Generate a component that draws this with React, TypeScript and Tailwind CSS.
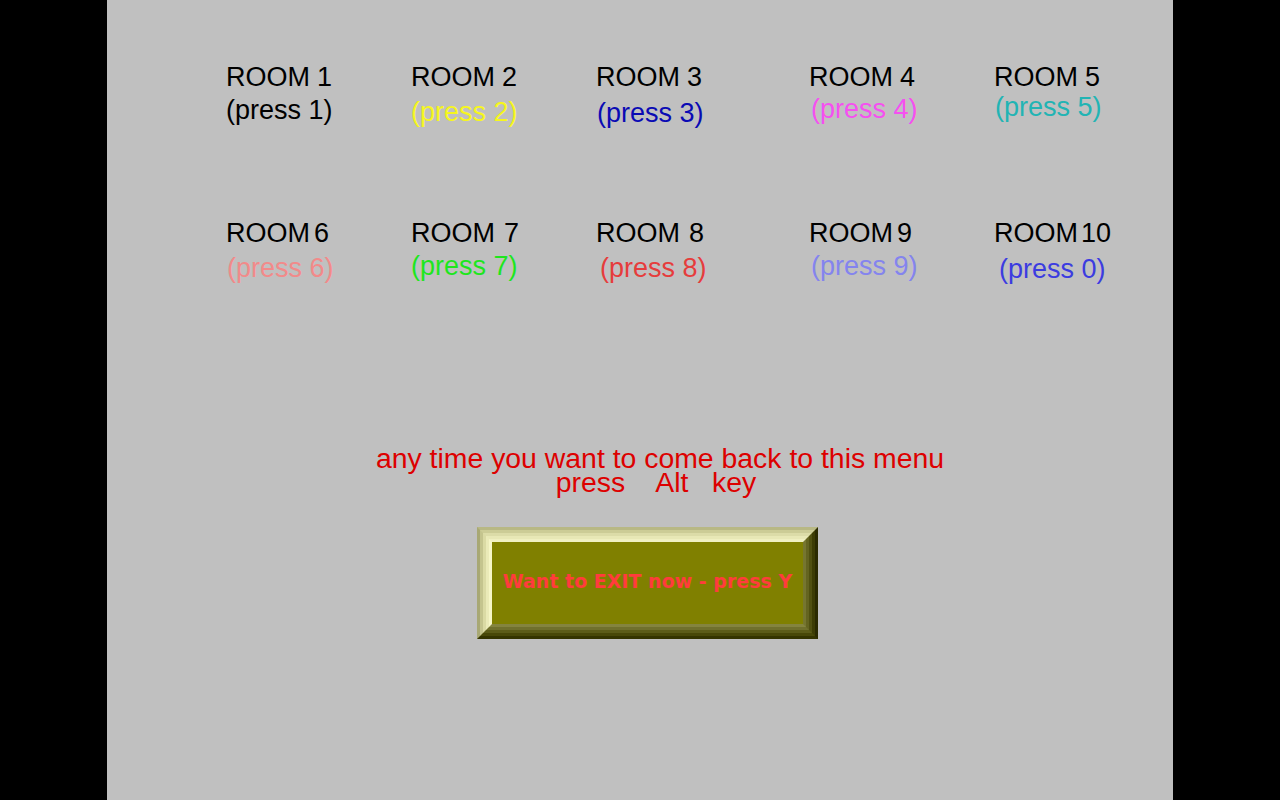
import React from "react";

type Room = {
  digit: string;
  gap: string;
  press: string;
  color: string;
  top: string;
  shift: string;
};

const rooms: Room[] = [
  { digit: "1", gap: "ml-[7px]", press: "(press 1)", color: "text-black", top: "mt-[1px]", shift: "ml-0" },
  { digit: "2", gap: "ml-[7px]", press: "(press 2)", color: "text-[#f6f61e]", top: "mt-[3px]", shift: "ml-0" },
  { digit: "3", gap: "ml-[7px]", press: "(press 3)", color: "text-[#0a0ab4]", top: "mt-[4px]", shift: "ml-[1px]" },
  { digit: "4", gap: "ml-[7px]", press: "(press 4)", color: "text-[#f550f0]", top: "mt-0", shift: "ml-[2px]" },
  { digit: "5", gap: "ml-[7px]", press: "(press 5)", color: "text-[#22b4b4]", top: "-mt-[2px]", shift: "ml-[1px]" },
  { digit: "6", gap: "ml-[4px]", press: "(press 6)", color: "text-[#f28a8a]", top: "mt-[3px]", shift: "ml-[1px]" },
  { digit: "7", gap: "ml-[9px]", press: "(press 7)", color: "text-[#1ee61e]", top: "mt-[1px]", shift: "ml-0" },
  { digit: "8", gap: "ml-[9px]", press: "(press 8)", color: "text-[#e63c3c]", top: "mt-[3px]", shift: "ml-[4px]" },
  { digit: "9", gap: "ml-[4px]", press: "(press 9)", color: "text-[#8484ee]", top: "mt-[1px]", shift: "ml-[2px]" },
  { digit: "10", gap: "ml-[3px]", press: "(press 0)", color: "text-[#3c3ce0]", top: "mt-[4px]", shift: "ml-[5px]" },
];

function RoomItem({ room }: { room: Room }) {
  return (
    <div className="flex flex-col items-start text-[27px] leading-[32px]">
      <span className="flex whitespace-pre text-black">
        <span>ROOM</span>
        <span className={room.gap}>{room.digit}</span>
      </span>
      <span className={`whitespace-pre ${room.color} ${room.top} ${room.shift}`}>{room.press}</span>
    </div>
  );
}

// five 3px rings, outer to inner, fake the bevel gradient
function ExitButton() {
  return (
    <div className="ml-[370px] mt-[33px] h-[112px] w-[341px] border-[3px] border-t-[#b8b884] border-l-[#a8a874] border-b-[#343400] border-r-[#2a2a00]">
      <div className="h-full w-full border-[3px] border-t-[#cccc96] border-l-[#c4c48e] border-b-[#484808] border-r-[#3c3c04]">
        <div className="h-full w-full border-[3px] border-t-[#dcdca8] border-l-[#dadaa4] border-b-[#5c5c18] border-r-[#505010]">
          <div className="h-full w-full border-[3px] border-t-[#e8e8b6] border-l-[#eaeab8] border-b-[#70702c] border-r-[#646420]">
            <div className="flex h-full w-full items-center justify-center border-[3px] border-t-[#f0f0c2] border-l-[#f6f6c8] border-b-[#84843e] border-r-[#767630] bg-[#808000]">
              <span
                className="-mt-[3px] text-[19px] font-bold text-[#ff3c3c]"
                style={{ fontFamily: '"DejaVu Sans", Verdana, sans-serif' }}
              >
                Want to EXIT now - press Y
              </span>
            </div>
          </div>
        </div>
      </div>
    </div>
  );
}

export default function App() {
  return (
    <div
      className="flex h-screen w-full bg-black"
      style={{ fontFamily: '"Liberation Sans", Arial, sans-serif' }}
    >
      <div className="w-[107px] shrink-0 bg-black" />
      <div className="flex w-[1066px] shrink-0 flex-col bg-[#c0c0c0]">
        <div className="grid grid-cols-[185px_185px_213px_185px_auto] auto-rows-[156px] pl-[119px] pt-[61px]">
          {rooms.map((room) => (
            <RoomItem key={room.digit} room={room} />
          ))}
        </div>
        <div className="mt-[73px] flex flex-col items-center pl-[40px] text-[28.4px] leading-[24px] text-[#dd0000]">
          <span className="whitespace-pre">any time you want to come back to this menu</span>
          <span className="whitespace-pre pr-[8px]">press    Alt   key</span>
        </div>
        <ExitButton />
      </div>
      <div className="flex-1 bg-black" />
    </div>
  );
}
